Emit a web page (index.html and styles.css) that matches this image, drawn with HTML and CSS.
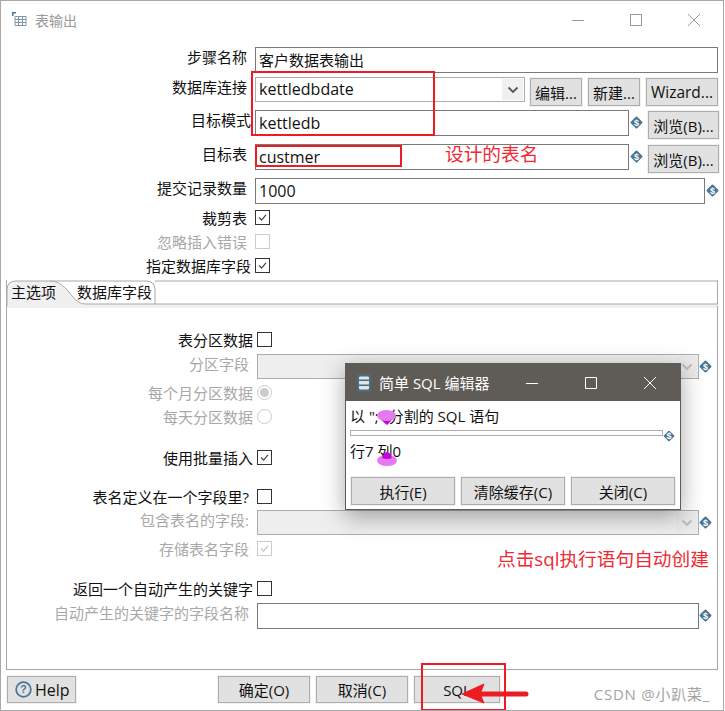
FILE: index.html
```html
<!DOCTYPE html>
<html lang="en">
<head>
  <meta charset="UTF-8">
  <title>表输出</title>
  <link rel="stylesheet" href="styles.css">
</head>
<body>
  <svg class="defs">
    <symbol id="tick" viewBox="0 0 15 15">
      <path d="M3.500 7.500 6.500 10.500 11.500 4.500" fill="none" stroke="currentColor" stroke-width="1.400"/>
    </symbol>
    <symbol id="chev" viewBox="0 0 12 8">
      <path d="M1.500 1.500 6 6 10.500 1.500" fill="none" stroke="currentColor" stroke-width="1.800"/>
    </symbol>
  </svg>

  <div class="window">
    <div class="titlebar">
      <svg class="title-icon" viewBox="0 0 15 15">
        <path d="M3 4.500h11v9H3zM3 7.500h11M3 10.500h11M6.500 4.500v9M10.500 4.500v9" fill="none" stroke="#7d97a8"/>
        <path d="M0 0h4v1.500H1.500V4H0z" fill="#4a7696"/>
      </svg>
      <span class="title-text">表输出</span>
      <div class="win-controls">
        <svg viewBox="0 0 12 12"><path d="M0 6.500h12" stroke="#999"/></svg>
        <svg viewBox="0 0 12 12"><path d="M.5.500h11v11H.5z" fill="none" stroke="#999"/></svg>
        <svg viewBox="0 0 12 12"><path d="M0 0 12 12M12 0 0 12" stroke="#999"/></svg>
      </div>
    </div>

    <div class="form">
      <div class="row row-a">
        <label class="label">步骤名称</label>
        <div class="input input-full">客户数据表输出</div>
      </div>
      <div class="row row-b">
        <label class="label">数据库连接</label>
        <div class="combo combo-main latin">kettledbdate<span class="combo-btn"><svg class="chev"><use href="#chev"/></svg></span></div>
        <button class="btn btn-sm">编辑...</button>
        <button class="btn btn-sm">新建...</button>
        <button class="btn btn-wizard">Wizard...</button>
      </div>
      <div class="row row-c">
        <label class="label label-flush">目标模式</label>
        <div class="input input-mid latin">kettledb</div>
        <span class="var">$</span>
        <button class="btn btn-browse">浏览(B)...</button>
      </div>
      <div class="row row-c">
        <label class="label">目标表</label>
        <div class="input input-mid latin">custmer</div>
        <span class="var">$</span>
        <button class="btn btn-browse">浏览(B)...</button>
      </div>
      <div class="row row-a">
        <label class="label">提交记录数量</label>
        <div class="input input-wide latin">1000</div>
        <span class="var">$</span>
      </div>
      <div class="row row-check first-check">
        <label class="label">裁剪表</label>
        <span class="check"><svg><use href="#tick"/></svg></span>
      </div>
      <div class="row row-check">
        <label class="label off">忽略插入错误</label>
        <span class="check check-off"></span>
      </div>
      <div class="row row-check last-check">
        <label class="label label-flush">指定数据库字段</label>
        <span class="check"><svg><use href="#tick"/></svg></span>
      </div>
    </div>

    <div class="tabs">
      <div class="tab-head">
        <svg class="tab-outline" viewBox="0 0 712 26">
          <path d="M1 26V10Q1 1 10 1H44C54 1 60 8 66 16 71 22 75 24 80 24H712V26z" fill="#f0f0f0"/>
          <path d="M1 26V10Q1 1 10 1H44C54 1 60 8 66 16 71 22 75 24 80 24H712" fill="none" stroke="#a9a9a9"/>
          <path d="M44 1H140Q149 1 149 10V24M149 1H712" fill="none" stroke="#a9a9a9"/>
        </svg>
        <span class="tab tab-on">主选项</span>
        <span class="tab">数据库字段</span>
      </div>
      <div class="tab-body">
        <div class="row row-check t-a">
          <label class="tlabel tlabel-check">表分区数据</label>
          <span class="check"></span>
        </div>
        <div class="row row-combo">
          <label class="tlabel off">分区字段</label>
          <div class="combo combo-off"><span class="combo-btn"><svg class="chev"><use href="#chev"/></svg></span></div>
          <span class="var">$</span>
        </div>
        <div class="row row-check t-b">
          <label class="tlabel tlabel-check off">每个月分区数据</label>
          <span class="radio radio-on"></span>
        </div>
        <div class="row row-check t-c">
          <label class="tlabel tlabel-check off">每天分区数据</label>
          <span class="radio"></span>
        </div>
        <div class="row row-check t-d">
          <label class="tlabel tlabel-check">使用批量插入</label>
          <span class="check"><svg><use href="#tick"/></svg></span>
        </div>
        <div class="row row-check t-e">
          <label class="tlabel">表名定义在一个字段里?</label>
          <span class="check"></span>
        </div>
        <div class="row row-combo">
          <label class="tlabel off">包含表名的字段:</label>
          <div class="combo combo-off"><span class="combo-btn"><svg class="chev"><use href="#chev"/></svg></span></div>
          <span class="var">$</span>
        </div>
        <div class="row row-check t-b">
          <label class="tlabel off">存储表名字段</label>
          <span class="check check-off"><svg><use href="#tick"/></svg></span>
        </div>
        <div class="row row-check t-f">
          <label class="tlabel tlabel-check">返回一个自动产生的关键字</label>
          <span class="check"></span>
        </div>
        <div class="row row-a">
          <label class="tlabel off">自动产生的关键字的字段名称</label>
          <div class="input input-tab"></div>
          <span class="var">$</span>
        </div>
      </div>
    </div>

    <div class="footer">
      <button class="btn btn-help">
        <svg viewBox="0 0 18 18"><circle cx="9" cy="9" r="7.800" fill="none" stroke="#4a7696" stroke-width="1.800"/><text x="9" y="13" text-anchor="middle" font-size="11" font-weight="700" fill="#4a7696" font-family="Liberation Sans, sans-serif">?</text></svg>
        Help
      </button>
      <div class="footer-main">
        <button class="btn btn-foot">确定(O)</button>
        <button class="btn btn-foot">取消(C)</button>
        <button class="btn btn-sql">SQL</button>
      </div>
    </div>

    <!-- simple sql editor floats over the form -->
    <div class="dialog">
      <div class="dialog-title">
        <svg class="db-icon" viewBox="0 0 14 18">
          <rect x="0" y="0" width="14" height="18" rx="2.500" fill="#4d6a7e"/>
          <path d="M3 2.500h8Q12 2.500 12 4V5.500H2V4Q2 2.500 3 2.500zM2 7h10v3.500H2zM2 12h10v2Q12 15.500 11 15.500H3Q2 15.500 2 14z" fill="#dfe6ea"/>
        </svg>
        <span class="dialog-name">简单 SQL 编辑器</span>
        <div class="dialog-controls">
          <svg viewBox="0 0 12 12"><path d="M0 6.500h12" stroke="#fff"/></svg>
          <svg viewBox="0 0 12 12"><path d="M.5.500h11v11H.5z" fill="none" stroke="#fff"/></svg>
          <svg viewBox="0 0 12 12"><path d="M0 0 12 12M12 0 0 12" stroke="#fff"/></svg>
        </div>
      </div>
      <div class="dialog-body">
        <div class="dialog-line">以 ";" 分割的 SQL 语句</div>
        <div class="sql-row">
          <div class="sql-area"></div>
          <span class="var">$</span>
        </div>
        <div class="dialog-line">行7 列0</div>
        <div class="dialog-btns">
          <button class="btn btn-dialog">执行(E)</button>
          <button class="btn btn-dialog">清除缓存(C)</button>
          <button class="btn btn-dialog">关闭(C)</button>
        </div>
      </div>
    </div>

    <!-- annotations painted on the screenshot -->
    <svg class="marks" viewBox="0 0 725 711">
      <rect x="252" y="72" width="182" height="63" fill="none" stroke="#ed1c24" stroke-width="2"/>
      <rect x="256" y="146" width="145" height="20" fill="none" stroke="#ed1c24" stroke-width="2"/>
      <rect x="422" y="664" width="83" height="46" fill="none" stroke="#ed1c24" stroke-width="2"/>
      <path d="M526 694H480" stroke="#ed1c24" stroke-width="5" stroke-linecap="round"/>
      <path d="M462 694 484 684 480 694 484 703z" fill="#ed1c24" stroke="#ed1c24" stroke-linejoin="round"/>
      <ellipse cx="386.500" cy="415.500" rx="9.500" ry="5.500" fill="#e57af0"/>
      <path d="M381 420Q387 422 392 420L387 425z" fill="#c800e0"/>
      <ellipse cx="387" cy="460.500" rx="10" ry="5.500" fill="#e57af0"/>
      <path d="M382 458Q384 452 387 452 390 452 392 458 387 460 382 458z" fill="#c800e0"/>
    </svg>
    <span class="note note-table">设计的表名</span>
    <span class="note note-sql">点击sql执行语句自动创建</span>
    <span class="watermark">CSDN @小趴菜_</span>
  </div>
</body>
</html>
```

FILE: styles.css
```css
* {
  box-sizing: border-box;
}

body {
  margin: 0;
  background: #fff;
  font-family: "Open Sans", "Noto Sans CJK SC", sans-serif;
  font-size: 15px;
  color: #111;
}

.defs {
  position: absolute;
  width: 0;
  height: 0;
}

.window {
  position: relative;
  width: 725px;
  height: 711px;
  overflow: hidden;
  background: #fff;
}

.window::after {
  content: "";
  position: absolute;
  inset: 0 1px 0 0;
  border: 1px solid #a8a8a8;
  pointer-events: none;
}

.titlebar {
  display: flex;
  align-items: center;
  height: 47px;
  padding: 0 25px 8px 12px;
}

.title-icon {
  width: 15px;
  height: 15px;
}

.title-text {
  margin-left: 8px;
  font-size: 14px;
  color: #999;
}

.win-controls {
  display: flex;
  gap: 46px;
  margin-left: auto;
}

.win-controls svg {
  width: 12px;
  height: 12px;
}

.row {
  display: flex;
  align-items: flex-start;
  margin-bottom: 4px;
}

.row-a {
  height: 26px;
}

.row-b {
  height: 29px;
}

.row-c {
  height: 30px;
}

.row-check {
  align-items: center;
  height: 15px;
  margin-bottom: 9px;
}

.first-check {
  margin-top: 6px;
}

.last-check {
  margin-bottom: 7px;
}

.label {
  width: 255px;
  padding-right: 8px;
  line-height: 20px;
  text-align: right;
  white-space: nowrap;
}

.label-flush {
  padding-right: 4px;
}

.off {
  color: #a8a8a8;
}

.input {
  height: 26px;
  padding: 0 3px;
  border: 1px solid #7a7a7a;
  line-height: 24px;
  background: #fff;
}

.latin {
  font-size: 16px;
}

.input-full {
  width: 463px;
}

.input-mid {
  width: 374px;
}

.input-wide {
  width: 450px;
}

.input-tab {
  width: 442px;
}

.combo {
  position: relative;
  display: flex;
  height: 25px;
  padding-left: 3px;
  border: 1px solid #adadad;
  line-height: 23px;
}

.combo-main {
  width: 270px;
  margin-right: 5px;
}

.combo-off {
  width: 442px;
  background: #eee;
}

.combo-btn {
  display: flex;
  align-items: center;
  justify-content: center;
  width: 21px;
  height: 21px;
  margin: 1px 1px 0 auto;
  background: #f0f0f0;
}

.chev {
  width: 12px;
  height: 8px;
  color: #555;
}

.combo-off .combo-btn {
  background: #eaeaea;
}

.combo-off .chev {
  color: #bbb;
}

/* variable marker, the little blue diamond beside fields */
.var {
  position: relative;
  isolation: isolate;
  display: flex;
  flex: none;
  align-items: center;
  justify-content: center;
  width: 13px;
  height: 13px;
  margin: 6px 0 0 1px;
  font: 700 9px "Liberation Sans", sans-serif;
  color: #fff;
}

.var::before {
  content: "";
  position: absolute;
  inset: 2px;
  z-index: -1;
  border-radius: 1px;
  background: #4a7696;
  transform: rotate(45deg);
}

.tab-body .var {
  margin-left: 0;
}

.btn {
  height: 28px;
  padding: 0;
  border: 1px solid #adadad;
  outline: 1px solid #f2f2f2;
  background: #e1e1e1;
  font: inherit;
  color: #111;
}

.row-b .btn {
  margin-top: 1px;
}

.btn-sm {
  width: 52px;
  margin-right: 6px;
}

.btn-wizard {
  width: 72px;
  font-size: 15.500px;
}

.btn-browse {
  width: 71px;
  margin: 1px 0 0 5px;
}

.check {
  display: block;
  flex: none;
  width: 15px;
  height: 15px;
  border: 1px solid #333;
  background: #fff;
  color: #444;
}

.check svg {
  display: block;
  width: 13px;
  height: 13px;
}

.check-off {
  border-color: #ccc;
  color: #c4c4c4;
}

.radio {
  position: relative;
  display: block;
  flex: none;
  width: 15px;
  height: 15px;
  border: 1px solid #ccc;
  border-radius: 50%;
  background: #fff;
}

.radio-on::after {
  content: "";
  position: absolute;
  inset: 2px;
  border-radius: 50%;
  background: #ccc;
}

.tabs {
  position: relative;
  width: 712px;
  height: 390px;
  margin-left: 6px;
  border: 1px solid #a8a8a8;
  border-top: none;
}

.tab-head {
  position: relative;
  display: flex;
  height: 26px;
  margin: 0 -1px;
}

.tab-outline {
  position: absolute;
  top: 0;
  left: 0;
  width: 712px;
  height: 26px;
}

.tab {
  position: relative;
  line-height: 25px;
  white-space: nowrap;
}

.tab-on {
  margin: 0 21px 0 5px;
}

.tab-body {
  height: 363px;
  padding-top: 24px;
  border-top: 2px solid #f0f0f0;
}

.tlabel {
  width: 250px;
  padding-right: 8px;
  line-height: 20px;
  text-align: right;
  white-space: nowrap;
}

.tlabel-check {
  padding-right: 4px;
}

.row-combo {
  height: 25px;
  margin-bottom: 0;
}

.t-a {
  margin-bottom: 7px;
}

.t-b {
  margin-top: 6px;
}

.t-c {
  margin-bottom: 26px;
}

.t-d {
  margin-bottom: 24px;
}

.t-e {
  margin-bottom: 6px;
}

.t-f {
  margin-top: 25px;
  margin-bottom: 7px;
}

.footer {
  display: flex;
  align-items: center;
  padding: 6px 0 0 7px;
}

.btn-help {
  display: flex;
  align-items: center;
  gap: 3px;
  width: 69px;
  height: 27px;
  padding-left: 7px;
  font-size: 16px;
}

.btn-help svg {
  width: 17px;
  height: 17px;
}

.footer-main {
  display: flex;
  gap: 6px;
  margin-left: 142px;
}

.btn-foot {
  width: 92px;
  height: 27px;
}

.btn-sql {
  width: 86px;
  height: 27px;
}

.dialog {
  position: absolute;
  left: 345px;
  top: 363px;
  width: 336px;
  height: 147px;
  background: #fff;
  border: 1px solid #5f5b57;
  box-shadow: 0 6px 22px rgba(0, 0, 0, 0.35);
}

.dialog-title {
  display: flex;
  align-items: center;
  height: 37px;
  padding: 0 24px 0 11px;
  background: #5f5b57;
  color: #fff;
}

.db-icon {
  width: 14px;
  height: 18px;
}

.dialog-name {
  margin-left: 8px;
}

.dialog-controls {
  display: flex;
  gap: 47px;
  margin-left: auto;
}

.dialog-controls svg {
  width: 12px;
  height: 12px;
}

.dialog-body {
  padding: 4px 5px 0 4px;
}

.dialog-line {
  height: 22px;
  line-height: 22px;
  white-space: nowrap;
}

.sql-row {
  display: flex;
  height: 10px;
  margin-top: 3px;
}

.sql-area {
  width: 316px;
  height: 6px;
  border: 1px solid #adadad;
}

.sql-row .var {
  width: 12px;
  height: 12px;
  margin: 0;
}

.dialog-btns {
  display: flex;
  gap: 6px;
  margin: 15px 0 0 1px;
}

.btn-dialog {
  flex: none;
  width: 104px;
  height: 28px;
}

.marks {
  position: absolute;
  left: 0;
  top: 0;
  width: 725px;
  height: 711px;
  pointer-events: none;
}

.note {
  position: absolute;
  font-size: 18.700px;
  color: #ee2a33;
  white-space: nowrap;
}

.note-table {
  left: 445px;
  top: 139px;
}

.note-sql {
  left: 497px;
  top: 544px;
}

.watermark {
  position: absolute;
  right: 15px;
  bottom: 7px;
  font-size: 15px;
  letter-spacing: 0.750px;
  color: #a3a3a3;
}
```
